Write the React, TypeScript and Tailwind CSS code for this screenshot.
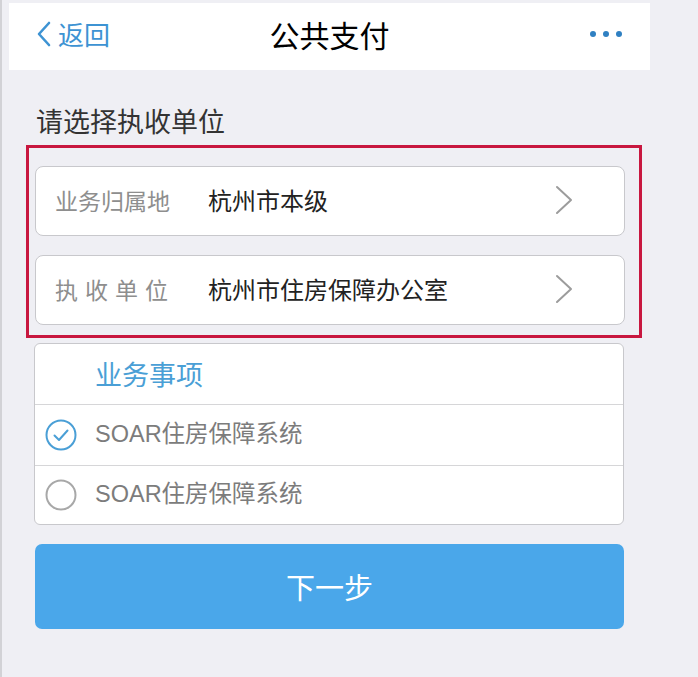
import React, { useState } from 'react';

const FONT = { fontFamily: '"Noto Sans CJK SC", "Liberation Sans", sans-serif' };
const LATIN_FONT = { fontFamily: '"Liberation Sans", "Noto Sans CJK SC", sans-serif' };

const Chevron = () => (
    <svg width="20" height="30" viewBox="0 0 20 30" fill="none">
        <path d="M3 2 L17 15 L3 28" stroke="#9c9c9c" strokeWidth="2" strokeLinecap="round" strokeLinejoin="round" />
    </svg>
);

const Radio = ({ checked }: { checked: boolean }) => (
    <svg width="32" height="32" viewBox="0 0 32 32" fill="none">
        <circle cx="16" cy="16" r="14.5" stroke={checked ? '#4a9fd6' : '#a8a8a8'} strokeWidth="2" />
        {checked && (
            <path d="M9.5 16.5 L14 21 L22.5 11.5" stroke="#4a9fd6" strokeWidth="2" strokeLinecap="round" strokeLinejoin="round" />
        )}
    </svg>
);

const App = () => {
    const [selected, setSelected] = useState(0);
    const items = ['SOAR住房保障系统', 'SOAR住房保障系统'];

    return (
        <div className="w-[698px] h-[677px] bg-[#efeff4] border-l-2 border-[#d2d2d6] overflow-hidden" style={FONT}>
            {/* Nav bar */}
            <div className="ml-[7px] mt-[3px] w-[641px] h-[67px] bg-white flex items-center justify-between px-[27px] pb-[6px]">
                <div className="flex items-center gap-[6px] text-[#3d93d3] w-[120px]">
                    <svg width="16" height="26" viewBox="0 0 16 26" fill="none">
                        <path d="M13 2 L3 13 L13 24" stroke="#3d93d3" strokeWidth="2.6" strokeLinecap="round" strokeLinejoin="round" />
                    </svg>
                    <span className="text-[26px] leading-none">返回</span>
                </div>
                <h1 className="text-[30px] leading-none text-black">公共支付</h1>
                <div className="w-[120px] flex justify-end gap-[7px] pr-[1px]">
                    <span className="w-[6px] h-[6px] rounded-full bg-[#2f80c2]" />
                    <span className="w-[6px] h-[6px] rounded-full bg-[#2f80c2]" />
                    <span className="w-[6px] h-[6px] rounded-full bg-[#2f80c2]" />
                </div>
            </div>

            <div className="pl-[33px] w-[623px]">
                <p className="mt-[33px] ml-[1px] text-[27px] leading-[36px] text-[#333]">请选择执收单位</p>

                {/* Select rows, annotated with the red frame */}
                <div className="relative mt-[27px] flex flex-col gap-[19px]">
                    <div className="h-[70px] bg-white rounded-[8px] border border-[#c8c8cc] flex items-center pl-[19px] pr-[50px] pb-[2px]">
                        <span className="w-[153px] text-[23px] text-[#8e8e8e]">业务归属地</span>
                        <span className="flex-1 text-[24px] text-[#222]">杭州市本级</span>
                        <Chevron />
                    </div>
                    <div className="h-[70px] bg-white rounded-[8px] border border-[#c8c8cc] flex items-center pl-[19px] pr-[50px] pb-[2px]">
                        <span className="w-[153px] text-[23px] text-[#8e8e8e] tracking-[7px]">执收单位</span>
                        <span className="flex-1 text-[24px] text-[#222]">杭州市住房保障办公室</span>
                        <Chevron />
                    </div>
                    <div className="absolute -left-[9px] -top-[21px] -right-[17px] -bottom-[13px] border-[3px] border-[#c8173f] pointer-events-none" />
                </div>

                {/* Business items */}
                <div className="mt-[18px] w-[590px] -ml-[1px] bg-white rounded-[6px] border border-[#c8c8cc] overflow-hidden">
                    <div className="h-[61px] flex items-center pl-[60px] border-b border-[#d6d6d8]">
                        <span className="text-[27px] text-[#4a9fd6]">业务事项</span>
                    </div>
                    {items.map((item, i) => (
                        <div
                            key={i}
                            onClick={() => setSelected(i)}
                            className={`flex items-center pl-[10px] gap-[18px] cursor-pointer ${i < items.length - 1 ? 'h-[61px] border-b border-[#d6d6d8]' : 'h-[58px]'}`}
                        >
                            <Radio checked={selected === i} />
                            <span className="text-[23.5px] text-[#7c7c7c]" style={LATIN_FONT}>{item}</span>
                        </div>
                    ))}
                </div>

                <button className="mt-[19px] w-[589px] h-[85px] rounded-[7px] bg-[#4aa7ea] text-white text-[29px] flex items-center justify-center">
                    下一步
                </button>
            </div>
        </div>
    );
};

export default App;
